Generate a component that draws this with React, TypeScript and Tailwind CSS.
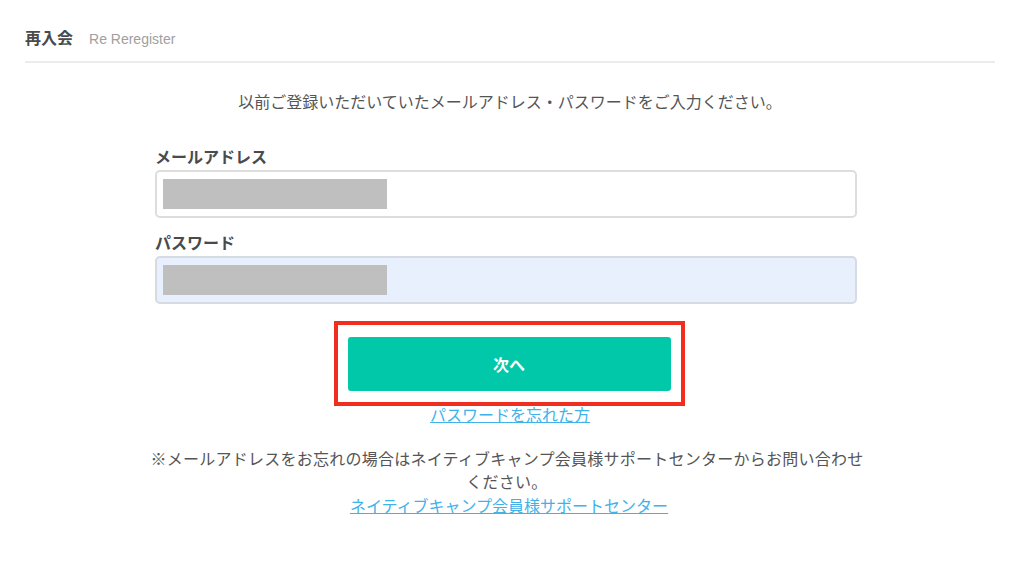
const jp = "font-['Noto_Sans_CJK_JP','Noto_Sans',sans-serif]"

function Field({ label, autofill }: { label: string; autofill?: boolean }) {
  return (
    <div>
      <div className="h-[22px] text-[16px] font-bold leading-[22px] text-[#4a4a4a]">{label}</div>
      <div
        className={
          "mt-[3px] flex h-[48px] items-center rounded-[5px] border-2 px-[6px] " +
          (autofill ? "border-[#d6dbe3] bg-[#e8f0fe]" : "border-[#dddddd] bg-white")
        }
      >
        <div className="h-[30px] w-[224px] bg-[#bfbfbf]" />
      </div>
    </div>
  )
}

export default function App() {
  return (
    <div className={`${jp} min-h-[570px] bg-white pl-[25px] pr-[29px] pt-[25px] text-[#555]`}>
      {/* header */}
      <div className="flex items-baseline gap-[16px] pb-[11px]">
        <span className="text-[16px] font-bold text-[#4a4a4a]">再入会</span>
        <span className="font-['Liberation_Sans',sans-serif] text-[14px] text-[#a0a0a0]">Re Reregister</span>
      </div>
      <div className="h-[2px] bg-[#ececec]" />

      <p className="mt-[26px] text-center text-[16px] leading-[24px] text-[#555]">
        以前ご登録いただいていたメールアドレス・パスワードをご入力ください。
      </p>

      <div className="mx-auto mt-[32px] flex w-[702px] -translate-x-[4px] flex-col gap-[13px]">
        <Field label="メールアドレス" />
        <Field label="パスワード" autofill />
      </div>

      <div className="mt-[17px] flex flex-col items-center">
        <div className="-translate-x-[1px] border-[4px] border-[#f02d1e] px-[10px] pb-[11px] pt-[12px]">
          <button className="h-[54px] w-[323px] rounded-[3px] bg-[#00c8a8] text-[16px] font-bold text-white">
            次へ
          </button>
        </div>
        <a href="#" className="mt-[-2px] text-[16px] leading-[20px] text-[#3fb2ea] underline">
          パスワードを忘れた方
        </a>
      </div>

      <div className="mx-auto mt-[23px] w-[720px] -translate-x-[3px] text-center text-[16px] leading-[23px] text-[#555]">
        <p className="tracking-[0.25px]">※メールアドレスをお忘れの場合はネイティブキャンプ会員様サポートセンターからお問い合わせください。</p>
        <a href="#" className="mt-[1px] inline-block translate-x-[2px] text-[#3fb2ea] underline">
          ネイティブキャンプ会員様サポートセンター
        </a>
      </div>
    </div>
  )
}
